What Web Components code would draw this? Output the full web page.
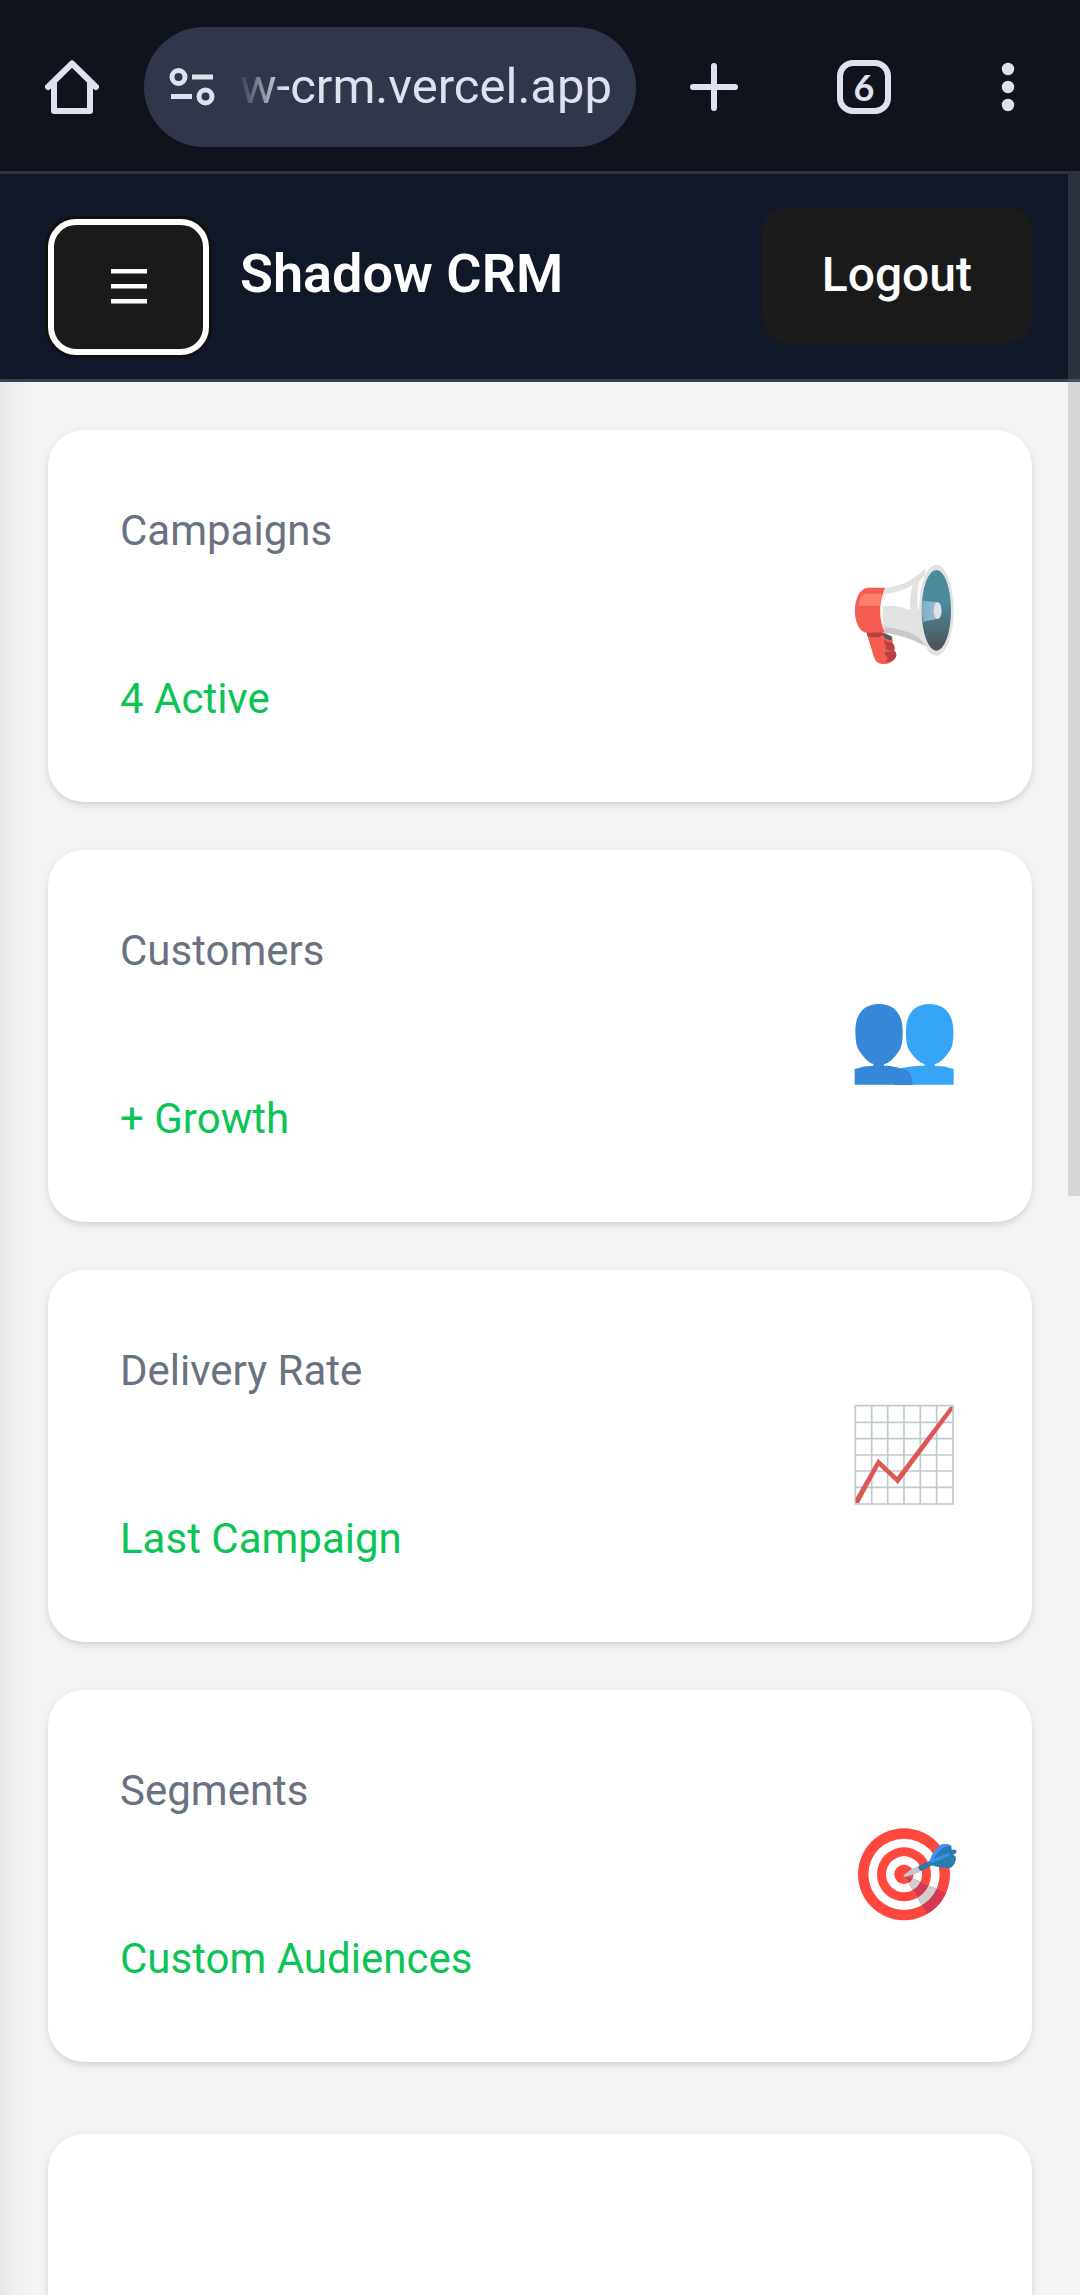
<!DOCTYPE html>
<html lang="en">
<head>
<meta charset="utf-8">
<meta name="viewport" content="width=device-width, initial-scale=1">
<title>Shadow CRM</title>
<style>
html, body { margin: 0; height: 100%; }
body { font-family: Roboto, "Liberation Sans", sans-serif; background: #f3f4f6; overflow: hidden; }
</style>
</head>
<body>
<crm-screen></crm-screen>
<script>
const define = (name, html) => {
  const template = document.createElement('template');
  template.innerHTML = html;
  customElements.define(name, class extends HTMLElement {
    constructor() {
      super();
      this.attachShadow({ mode: 'open' }).append(template.content.cloneNode(true));
    }
  });
};

define('browser-bar', `
<style>
:host { display: flex; align-items: center; flex: none; padding: 27px 0 24px; background: #10131c; border-bottom: 3px solid #2e323e; color: #dfe1ef; }
button { flex: none; width: 144px; height: 120px; padding: 0; border: 0; background: none; color: inherit; display: grid; place-items: center; }
button.new { width: 156px; }
svg { display: block; fill: none; stroke: currentColor; stroke-width: 6; }
.pill { flex: 1; min-width: 0; height: 120px; box-sizing: border-box; border-radius: 60px; background: #31374a; display: flex; align-items: center; gap: 16px; padding: 0 24px; }
.pill svg { flex: none; stroke-width: 5; }
input { flex: 1; min-width: 0; height: 72px; padding: 0; border: 0; outline: 0; background: none; color: inherit; font: 400 49px/72px Roboto, sans-serif; text-align: right; -webkit-mask-image: linear-gradient(90deg, transparent 6px, #000 52px); mask-image: linear-gradient(90deg, transparent 6px, #000 52px); }
.tabs span { box-sizing: border-box; width: 54px; height: 54px; border: 6px solid; border-radius: 16px; display: grid; place-items: center; font: 700 36px/42px Lato, sans-serif; }
</style>
<button aria-label="Home"><svg width="60" height="54" viewBox="42 60 60 54" stroke-linecap="round" stroke-linejoin="round"><path d="M48 87 72 63.500 96 87M54 83V111H90V83"/></svg></button>
<div class="pill">
<svg width="48" height="48" viewBox="168 63 48 48"><circle cx="178.500" cy="77" r="6.500"/><path d="M192 77H213M171 96.500H192"/><circle cx="205.500" cy="96.500" r="6.500"/></svg>
<input type="text" aria-label="Address" value="w-crm.vercel.app">
</div>
<button class="new" aria-label="New tab"><svg width="54" height="54" viewBox="0 0 54 54" stroke-linecap="round"><path d="M27 6V48M6 27H48"/></svg></button>
<button class="tabs" aria-label="Open tabs"><span>6</span></button>
<button aria-label="More options"><svg width="54" height="54" viewBox="0 0 54 54" style="fill:currentColor;stroke:none"><circle cx="27" cy="9" r="6.200"/><circle cx="27" cy="27" r="6.200"/><circle cx="27" cy="45" r="6.200"/></svg></button>
`);

define('crm-header', `
<style>
:host { display: flex; flex: none; justify-content: space-between; align-items: flex-start; padding: 33px 48px 24px; background: #101726; border-bottom: 3px solid #374151; color: #fff; }
.brand { display: flex; align-items: flex-start; gap: 31px; }
h1 { margin: 0; font-size: 54px; line-height: 134px; font-weight: 600; }
button { box-sizing: border-box; height: 136px; border: 0; border-radius: 24px; background: #1a1a1a; color: #fff; font: 500 48px/72px Roboto, sans-serif; padding: 0 60px; }
.menu { width: 161px; margin-top: 12px; padding: 0; border: 6px solid #fff; border-radius: 28px; box-shadow: 0 0 0 3px #101010; display: grid; place-items: center; }
svg { display: block; }
</style>
<div class="brand">
<button class="menu" aria-label="Menu"><svg width="36" height="36" viewBox="0 0 36 36" fill="#fff"><path d="M0 0h36v4.500H0zM0 15h36v4.500H0zM0 30h36v4.500H0z"/></svg></button>
<h1><slot></slot></h1>
</div>
<button>Logout</button>
`);

define('stat-card', `
<style>
:host { display: flex; flex: none; box-sizing: border-box; min-height: 372px; padding: 71px 72px 73px; justify-content: space-between; align-items: stretch; background: #fff; border-radius: 36px; box-shadow: 0 3px 9px rgba(0,0,0,.1), 0 3px 6px -3px rgba(0,0,0,.1); font-size: 42px; line-height: 60px; }
.copy { display: flex; flex-direction: column; justify-content: space-between; color: #6a7282; }
.note { color: #0cc455; }
::slotted(svg) { display: block; width: 112px; height: 112px; align-self: center; }
</style>
<div class="copy"><slot name="label"></slot><span class="note"><slot name="note"></slot></span></div>
<slot name="icon"></slot>
`);

define('crm-screen', `
<style>
:host { display: flex; flex-direction: column; height: 100vh; overflow: hidden; }
.page { position: relative; flex: 1; min-height: 0; overflow: hidden; display: flex; flex-direction: column; }
main { flex: 1; min-height: 0; overflow: hidden; padding: 48px; display: flex; flex-direction: column; gap: 48px; background: linear-gradient(90deg, #e6e7e9, #eeeff1 12px, #f3f4f6 34px); }
stat-card:last-of-type { margin-top: 24px; }
.thumb { position: absolute; top: 0; right: 0; width: 12px; height: 48.2%; background: rgba(127,127,127,.26); }
</style>
<browser-bar></browser-bar>
<div class="page">
<crm-header>Shadow CRM</crm-header>
<main>
<stat-card><span slot="label">Campaigns</span><span slot="note">4 Active</span>
<svg slot="icon" viewBox="54 57 336 336" aria-hidden="true">
<defs><linearGradient id="bell" x1="0" y1="0" x2="0" y2="1"><stop offset=".4" stop-color="#4b8b9b"/><stop offset="1" stop-color="#4d5057"/></linearGradient><linearGradient id="cone" x1="0" y1="0" x2="1" y2="0"><stop offset="0" stop-color="#7fabc6"/><stop offset="1" stop-color="#9bc0d8"/></linearGradient></defs>
<path d="M108 274 132 352Q138 372 158 372L172 371Q192 366 199 348Q201 339 192 332Q197 318 187 308Q192 298 182 291L158 274Z" fill="#f65c51"/>
<path d="M110 276H157L163 285 150 290Q130 294 113 288ZM163 299Q170 306 187 308Q196 318 192 332Q175 334 166 327Q172 317 163 311ZM165 334Q180 337 193 332Q201 339 199 348Q192 366 165 367Q181 355 165 345Z" fill="#b84142"/>
<path d="M160 280 184 288Q190 297 180 301L164 295Z" fill="#55585c"/>
<path d="M158 143Q225 143 286 86L286 319Q223 281 158 278Z" fill="#e2e2e3"/>
<path d="M164 162Q206 158 248 136Q238 165 241 211Q203 195 154 198Q156 177 164 162Z" fill="#fff"/>
<path d="M267 126Q277 111 287 106Q276 147 276 207H263Q260 160 267 126Z" fill="#fff"/>
<path d="M164 262Q221 265 266 292L287 317Q219 284 162 278Z" fill="#c8c8c9"/>
<path d="M165 143H114C63 146 61 276 113 278L164 277C144 231 148 182 165 143Z" fill="#f65c51"/>
<path d="M108 161H156Q151 174 150 197L86 197Q89 163 108 161Z" fill="#ff8169"/>
<ellipse cx="319" cy="211" rx="52" ry="137" fill="#e2e2e3"/>
<ellipse cx="319" cy="211" rx="44" ry="121" fill="url(#bell)"/>
<path d="M277 182 323 187V236L279 245Q273 213 277 182Z" fill="url(#cone)"/>
<ellipse cx="323" cy="212" rx="12" ry="25" fill="#e0e4e8"/>
</svg></stat-card>
<stat-card><span slot="label">Customers</span><span slot="note">+ Growth</span>
<svg slot="icon" viewBox="54 27 336 336" aria-hidden="true">
<path d="M283 282Q264 279 239 243Q227 229 228 183C228 130 254 102 298 102S370 130 370 183Q371 229 359 243Q335 279 314 283V287Q343 287 371 297V344H193V299Q243 286 283 287Z" fill="#36a5f6"/>
<path d="M210 303 223 297Q247 308 247 344H193Z" fill="#2b7fcc"/>
<path d="M130 282Q112 279 88 243Q76 229 76 183C76 130 103 102 147 102S218 130 218 183Q219 229 207 243Q183 279 162 283V287C212 288 247 302 247 344H74V297Q104 287 130 287Z" fill="#3787d8"/>
</svg></stat-card>
<stat-card><span slot="label">Delivery Rate</span><span slot="note">Last Campaign</span>
<svg slot="icon" viewBox="54 57 336 336" aria-hidden="true" fill="none">
<path d="M76 77H369V372H76ZM125 77V372M173 77V372M222 77V372M271 77V372M320 77V372M76 127H369M76 176H369M76 225H369M76 273H369M76 322H369" stroke="#bfc9ce" stroke-width="5"/>
<path d="M77 369V354L144 236 201 290 360 80H367V92L204 312 147 258 87 369Z" fill="#df5752"/>
</svg></stat-card>
<stat-card><span slot="label">Segments</span><span slot="note">Custom Audiences</span>
<svg slot="icon" viewBox="54 57 336 336" aria-hidden="true">
<defs><clipPath id="shade"><path d="M222 224 360 284 296 350Z"/></clipPath></defs>
<circle cx="222" cy="223" r="138" fill="#ff473e"/><circle cx="222" cy="223" r="107" fill="#fff"/><circle cx="222" cy="223" r="81" fill="#ff473e"/><circle cx="222" cy="223" r="54" fill="#fff"/><circle cx="222" cy="223" r="29" fill="#ff473e"/>
<g clip-path="url(#shade)"><circle cx="222" cy="223" r="138" fill="#d43b52"/><circle cx="222" cy="223" r="107" fill="#d0d0d0"/><circle cx="222" cy="223" r="81" fill="#d43b52"/><circle cx="222" cy="223" r="54" fill="#d0d0d0"/><circle cx="222" cy="223" r="29" fill="#d43b52"/></g>
<path d="M220 226 250 204 267 197 275 213 256 222 225 231Z" fill="#c5c9cd"/>
<path d="M266 198 300 182 307 196 273 213Q264 210 266 198Z" fill="#277eae"/>
<path d="M299 184Q311 147 332 135Q347 128 364 137L365 149 379 149 379 158 370 164 378 172Q377 195 362 203Q340 207 301 194Z" fill="#277eae"/>
<path d="M299 184Q311 147 332 135Q347 128 364 137Q333 136 309 178L357 158 361 166 305 190Z" fill="#3f8ff2"/>
</svg></stat-card>
<stat-card></stat-card>
</main>
<div class="thumb"></div>
</div>
`);
</script>
</body>
</html>
